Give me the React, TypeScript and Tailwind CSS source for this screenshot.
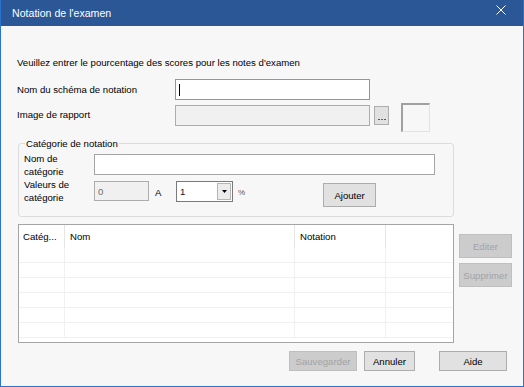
import React from 'react';

const btn = 'flex items-center justify-center border border-[#adadad] bg-[#e1e1e1] text-black';
const btnOff = 'flex items-center justify-center border border-[#bfbfbf] bg-[#cccccc] text-[#a3a3a3]';

function ListGrid() {
  const rows = [0, 1, 2, 3, 4, 5];
  return (
    <div className="w-[436px] h-[119px] border border-[#a5a5a5] bg-white overflow-hidden">
      <div className="flex h-[23px] items-center">
        <div className="w-[46px] h-full pl-[4px] flex items-center border-r border-[#e5e5e5]">Catég...</div>
        <div className="w-[230px] h-full pl-[5px] flex items-center border-r border-[#e5e5e5]">Nom</div>
        <div className="w-[91px] h-full pl-[5px] flex items-center border-r border-[#e5e5e5]">Notation</div>
        <div className="flex-1 h-full" />
      </div>
      {rows.map((r) => (
        <div key={r} className="flex h-[15px] border-b border-[#f0f0f0]">
          <div className="w-[46px] h-full border-r border-[#f0f0f0]" />
          <div className="w-[230px] h-full border-r border-[#f0f0f0]" />
          <div className="w-[91px] h-full border-r border-[#f0f0f0]" />
          <div className="flex-1" />
        </div>
      ))}
    </div>
  );
}

export default function App() {
  return (
    <div className="w-[524px] h-[387px] flex flex-col border-x border-b border-[#2a72cc] font-['Liberation_Sans',Arial,sans-serif] text-[9.6px] leading-[13px] text-black">
      <div className="h-[26px] bg-[#2b5797] flex items-center justify-between pl-[11px] pr-[17px] text-white text-[10.6px]">
        <span>Notation de l'examen</span>
        <svg width="10" height="10" viewBox="0 0 10 10" className="-mt-[6px]">
          <path d="M0.5 0.5 L9.5 9.5 M9.5 0.5 L0.5 9.5" stroke="white" strokeWidth="1" />
        </svg>
      </div>

      <div className="flex-1 bg-[#f7f7f7] pl-[16px] pt-[30px]">
        <div>Veuillez entrer le pourcentage des scores pour les notes d'examen</div>

        <div className="mt-[10px] flex items-center h-[21px]">
          <span className="w-[158px]">Nom du schéma de notation</span>
          <div className="w-[195px] h-[21px] border border-[#5ea3e6] bg-white flex items-center pl-[3px]">
            <span className="w-px h-[12px] bg-black" />
          </div>
        </div>

        <div className="mt-[5px] flex items-start h-[21px]">
          <span className="w-[158px] mt-[3px]">Image de rapport</span>
          <div className="w-[195px] h-[21px] border border-[#adadad] bg-[#f0f0f0]" />
          <div className="ml-[4px] mt-[1px] w-[15px] h-[19px] border border-[#adadad] bg-[#e1e1e1] flex items-end justify-center pb-[4px]">
            <span className="flex gap-[1px]">
              <span className="w-[2px] h-px bg-[#555]" />
              <span className="w-[2px] h-px bg-[#855]" />
              <span className="w-[2px] h-px bg-[#558]" />
            </span>
          </div>
          <div className="ml-[12px] -mt-[2px] w-[29px] h-[29px] border-t-2 border-l-2 border-t-[#a0a0a0] border-l-[#a0a0a0] border-r border-b border-r-[#e3e3e3] border-b-[#e3e3e3]" />
        </div>

        <div className="relative ml-[1px] mt-[17px] w-[436px] h-[74px] border border-[#dcdcdc] rounded-[3px] pl-[5px] pt-[10px]">
          <span className="absolute -top-[7px] left-[6px] px-[1px] bg-[#f7f7f7]">Catégorie de notation</span>
          <div className="flex items-center h-[21px]">
            <span className="w-[70px]">Nom de<br />catégorie</span>
            <div className="w-[341px] h-[21px] border border-[#a5a5a5] bg-white" />
          </div>
          <div className="mt-[6px] flex items-start h-[20px]">
            <span className="w-[70px] -mt-[3px]">Valeurs de<br />catégorie</span>
            <div className="w-[55px] h-[20px] border border-[#adadad] bg-[#f0f0f0] pl-[3px] pt-[3px] text-[#6d6d6d]">0</div>
            <span className="ml-[6px] mt-[5px] w-[21px]">A</span>
            <div className="w-[57px] h-[21px] border border-[#7a7a7a] bg-white flex">
              <span className="flex-1 pl-[3px] pt-[3px] text-[#1a0a3a]">1</span>
              <div className="w-[14px] my-[1px] mr-[1px] bg-[#ececec] border border-[#b5b5b5] flex items-center justify-center">
                <svg width="5" height="3" viewBox="0 0 5 3"><path d="M0 0 H5 L2.5 3 Z" fill="#000" /></svg>
              </div>
            </div>
            <span className="ml-[5px] mt-[5px] text-[8px] text-[#555]">%</span>
            <div className={`${btn} ml-[78px] mt-[2px] w-[53px] h-[24px]`}>Ajouter</div>
          </div>
        </div>

        <div className="ml-[1px] mt-[7px] flex items-start">
          <ListGrid />
          <div className="ml-[5px] mt-[10px] flex flex-col gap-[5px]">
            <div className={`${btnOff} w-[53px] h-[24px]`}>Editer</div>
            <div className={`${btnOff} w-[53px] h-[24px]`}>Supprimer</div>
          </div>
        </div>

        <div className="mt-[8px] flex justify-end pr-[16px]">
          <div className={`${btnOff} w-[68px] h-[20px]`}>Sauvegarder</div>
          <div className={`${btn} ml-[7px] w-[51px] h-[20px]`}>Annuler</div>
          <div className={`${btn} ml-[24px] w-[68px] h-[20px]`}>Aide</div>
        </div>
      </div>
    </div>
  );
}
